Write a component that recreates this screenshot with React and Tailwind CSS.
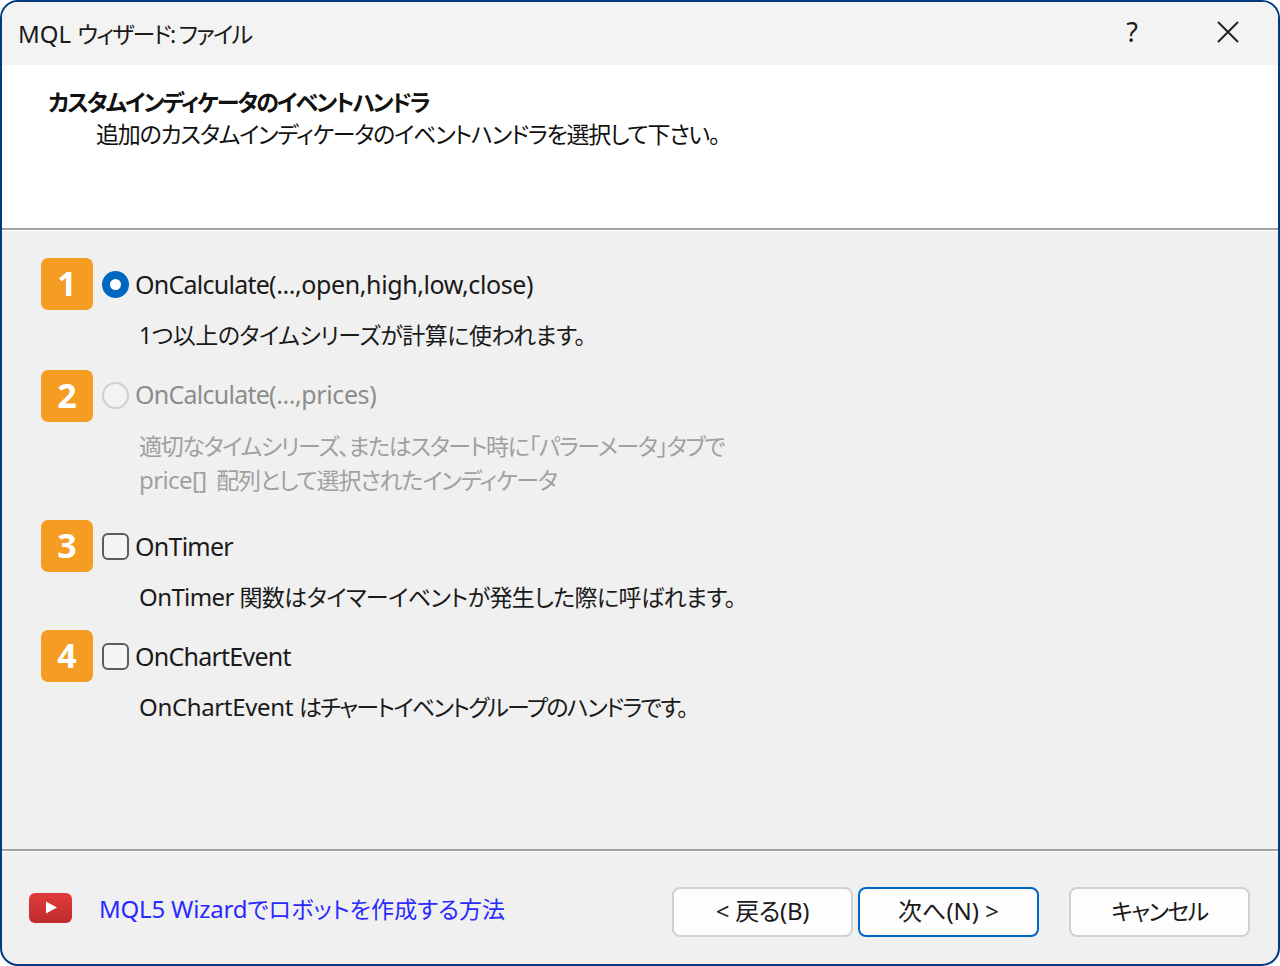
const F = "font-['Noto_Sans','Noto_Sans_CJK_JP',sans-serif]";
const JP = "text-[24px] [font-feature-settings:'palt'] whitespace-nowrap";
const JS = "text-[23px] [font-feature-settings:'palt'] whitespace-nowrap";

function Num({ n }) {
  return (
    <div className="w-[52px] h-[52px] shrink-0 rounded-[7px] bg-[#f59c22] text-white flex items-center justify-center pb-[2px] text-[34px] font-bold leading-none font-['Open_Sans',sans-serif]">
      {n}
    </div>
  );
}

function Radio({ on }) {
  if (on)
    return (
      <div className="w-[27px] h-[27px] rounded-full bg-[#0067c0] flex items-center justify-center shrink-0">
        <div className="w-[11px] h-[11px] rounded-full bg-white" />
      </div>
    );
  return <div className="w-[27px] h-[27px] rounded-full border-2 border-[#cfcfcf] bg-[#f3f3f3] shrink-0 mb-[2px]" />;
}

function Check() {
  return <div className="w-[27px] h-[27px] rounded-[6px] border-2 border-[#5c5c5c] bg-[#f5f5f5] shrink-0" />;
}

function Row({ n, control, label, rest, dim }) {
  return (
    <div className="flex items-center">
      <Num n={n} />
      <div className="ml-[9px]">{control}</div>
      <span className={`ml-[6px] text-[25px] leading-none tracking-[-0.75px] whitespace-nowrap ${dim ? "text-[#8d8d8d] mb-[4px]" : "text-[#1a1a1a]"}`}>
        {label}
        {rest && <span className="tracking-[-0.4px]">{rest}</span>}
      </span>
    </div>
  );
}

function Btn({ children, primary, small, className = "" }) {
  return (
    <div
      className={`w-[181px] h-[50px] rounded-[8px] bg-[#fdfdfd] flex items-center justify-center pb-[2px] ${small ? JS : JP} leading-none text-[#1a1a1a] ${
        primary ? "border-2 border-[#0067c0]" : "border-2 border-[#d0d0d0]"
      } ${className}`}
    >
      {children}
    </div>
  );
}

export default function App() {
  return (
    <div className={`w-[1280px] h-[966px] bg-white ${F}`}>
      <div className="w-full h-full rounded-[18px] border-2 border-[#003a80] bg-[#f0f0f0] overflow-hidden flex flex-col">
        <div className="h-[63px] shrink-0 bg-[#f3f3f3] flex items-center pl-[16px] pr-[39px]">
          <span className={`${JP} leading-none text-[#1a1a1a]`}>
            <span>MQL </span>
            <span className="text-[23px] tracking-[-1.75px]">ウィザード: ファイル</span>
          </span>
          <span className="ml-auto text-[27px] leading-none text-[#1a1a1a] mr-[79px] -mt-[4px]">?</span>
          <svg width="22" height="22" viewBox="0 0 22 22" fill="none" stroke="#222" strokeWidth="2" className="-mt-[4px] shrink-0">
            <path d="M1 1L21 21M21 1L1 21" />
          </svg>
        </div>

        <div className="h-[163px] shrink-0 bg-white pt-[24px] pl-[46px] text-[#111]">
          <div className={`${JS} leading-[27px] font-semibold tracking-[-2px]`}>カスタムインディケータのイベントハンドラ</div>
          <div className={`${JS} pl-[48px] mt-[5px] leading-[27px] tracking-[-1.24px]`}>追加のカスタムインディケータのイベントハンドラを選択して下さい。</div>
        </div>

        <div className="h-[2px] shrink-0 bg-[#a3a3a3]" />
        <div className="h-[1px] shrink-0 bg-white" />

        <div className="flex-1 pl-[39px] pt-[27px]">
          <Row n="1" control={<Radio on />} label="OnCalculate" rest="(...,open,high,low,close)" />
          <div className={`${JS} ml-[98px] mt-[9px] h-[51px] leading-[32px] tracking-[-0.5px] text-[#1a1a1a]`}>1つ以上のタイムシリーズが計算に使われます。</div>

          <Row n="2" control={<Radio />} label="OnCalculate" rest="(...,prices)" dim />
          <div className={`${JP} ml-[98px] mt-[8px] h-[90px] leading-[33px] text-[#a0a0a0]`}>
            <div className="text-[23px] tracking-[-1.37px]">適切なタイムシリーズ、またはスタート時に「パラーメータ」タブで</div>
            <div>
              <span className="tracking-[-0.6px]">price[] </span>
              <span className="ml-[4px] text-[23px] tracking-[-1.15px]">配列として選択されたインディケータ</span>
            </div>
          </div>

          <Row n="3" control={<Check />} label="OnTimer" />
          <div className={`${JP} ml-[98px] mt-[9px] h-[49px] leading-[32px] text-[#1a1a1a]`}>
            <span className="tracking-[-0.6px]">OnTimer </span>
            <span className="text-[23px] tracking-[-0.58px]">関数はタイマーイベントが発生した際に呼ばれます。</span>
          </div>

          <Row n="4" control={<Check />} label="OnChartEvent" />
          <div className={`${JP} ml-[98px] mt-[9px] leading-[32px] text-[#1a1a1a]`}>
            <span className="tracking-[-0.35px]">OnChartEvent </span>
            <span className="text-[23px] tracking-[-1.7px]">はチャートイベントグループのハンドラです。</span>
          </div>
        </div>

        <div className="h-[2px] shrink-0 bg-[#a3a3a3]" />
        <div className="h-[1px] shrink-0 bg-white" />

        <div className="h-[112px] shrink-0 flex items-start pt-[35px] pl-[27px] pr-[28px]">
          <svg width="43" height="30" viewBox="0 0 43 30" className="mt-[6px] shrink-0">
            <defs>
              <linearGradient id="yt" x1="0" y1="0" x2="0" y2="1">
                <stop offset="0" stopColor="#e23b3b" />
                <stop offset="1" stopColor="#bd2b2b" />
              </linearGradient>
            </defs>
            <rect x="0" y="0" width="43" height="30" rx="6" fill="url(#yt)" />
            <path d="M17 8.5L28 14.5L17 20.5Z" fill="#fff" />
          </svg>
          <span className={`${JP} ml-[27px] mt-[6px] leading-[32px] text-[#2a2aff]`}>
            <span className="tracking-[-0.2px]">MQL5 Wizard</span>
            <span className="text-[23px] tracking-[0.13px]">でロボットを作成する方法</span>
          </span>
          <Btn className="ml-auto tracking-[-0.3px]">&lt; 戻る(B)</Btn>
          <Btn primary className="ml-[5px] tracking-[0px]">次へ(N) &gt;</Btn>
          <Btn small className="ml-[30px] tracking-[-1.6px]">キャンセル</Btn>
        </div>
      </div>
    </div>
  );
}
